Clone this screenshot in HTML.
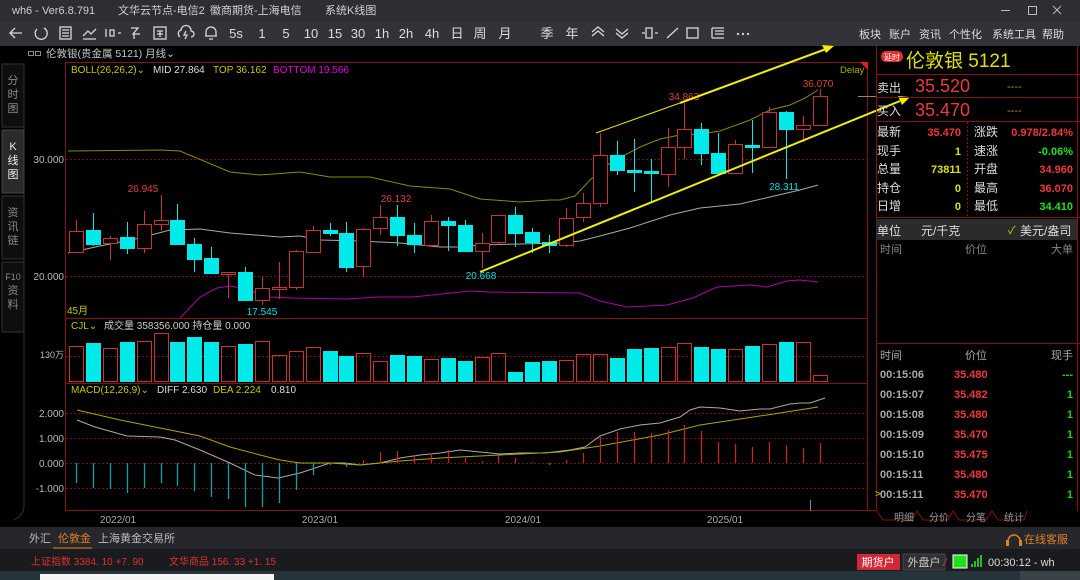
<!DOCTYPE html>
<html><head><meta charset="utf-8">
<style>
body{margin:0;width:1080px;height:580px;overflow:hidden;background:#000;font-family:"Liberation Sans","Noto Sans CJK SC",sans-serif;}
svg{display:block}
text{font-family:"Liberation Sans","Noto Sans CJK SC",sans-serif}
</style></head><body>
<svg id="s" width="1080" height="580" viewBox="0 0 1080 580" xmlns="http://www.w3.org/2000/svg">
<!-- title bar -->
<rect x="0" y="0" width="1080" height="21" fill="#2c2e32"/>
<g fill="#d0d0d0" font-size="11">
<text x="12" y="14">wh6  -  Ver6.8.791</text>
<text x="118" y="14">文华云节点-电信2</text>
<text x="210" y="14">徽商期货-上海电信</text>
<text x="325" y="14">系统K线图</text>
</g>
<g stroke="#bbb" stroke-width="1" fill="none">
<line x1="1001" y1="10.5" x2="1010" y2="10.5"/>
<rect x="1028.5" y="6.5" width="8" height="8"/>
<path d="M1053 6 L1061 14 M1061 6 L1053 14"/>
</g>
<!-- toolbar -->
<rect x="0" y="21" width="1080" height="25" fill="#313338"/>
<g fill="#dcdcdc" font-size="13" text-anchor="middle">
<text x="236" y="38">5s</text><text x="262" y="38">1</text><text x="286" y="38">5</text><text x="311" y="38">10</text><text x="335" y="38">15</text><text x="358" y="38">30</text><text x="382" y="38">1h</text><text x="406" y="38">2h</text><text x="432" y="38">4h</text><text x="457" y="38">日</text><text x="480" y="38">周</text><text x="505" y="38">月</text><text x="547" y="38">季</text><text x="572" y="38">年</text>
<text x="248" y="38" font-size="1"> </text>
</g>
<g stroke="#d8d8d8" stroke-width="1.3" fill="none">
<path d="M10 33 H22 M15 28 L10 33 L15 38"/>
<path d="M44 28 A6 6 0 1 1 37 29"/>
<rect x="60" y="27" width="11" height="12"/><path d="M62 30H69M62 33H69M62 36H69"/>
<path d="M83 36 L88 31 L91 34 L96 29 M83 39H96"/>
<path d="M106 29v8M110 30h4v6h-4zM118 33h3"/>
<path d="M131 28 L138 28 L133 34 L140 34 M134 34 v5"/>
<rect x="154" y="27" width="12" height="12"/><path d="M157 31h6M160 31v6M157 34h6"/>
<path d="M180 37 a4 4 0 0 1 1 -7 a5 5 0 0 1 10 1 a3 3 0 0 1 0 6 M186 31 l-2 4 h3 l-2 4"/>
<path d="M206 36 v-4 a5 5 0 0 1 10 0 v4 h1 h-12 M209 39h4"/>
<path d="M592 36 l6 -5 l6 5 M592 32 l6 -5 l6 5"/>
<path d="M616 29 l6 5 l6 -5 M616 33 l6 5 l6 -5"/>
<path d="M642 33h3M655 33h3M646 28h6v10h-6z"/>
<path d="M667 38 L678 28"/>
<rect x="687" y="28" width="11" height="10"/>
<path d="M712 28h12M715 31h9M715 34h9M712 38h12M712 28v10"/>
</g>
<g fill="#ccc"><circle cx="738" cy="34" r="1.2"/><circle cx="743" cy="34" r="1.2"/><circle cx="748" cy="34" r="1.2"/></g>
<g fill="#dcdcdc" font-size="11">
<text x="859" y="38">板块</text><text x="889" y="38">账户</text><text x="919" y="38">资讯</text><text x="949" y="38">个性化</text><text x="992" y="38">系统工具</text><text x="1042" y="38">帮助</text>
</g>
<!-- chart header -->
<g stroke="#888" fill="none" stroke-width="1"><rect x="28.5" y="51.5" width="5" height="4"/><rect x="35.5" y="51.5" width="5" height="4"/></g>
<text x="46" y="57" fill="#c8c8c8" font-size="10.5">伦敦银(贵金属 5121)   月线⌄</text>
<!-- left tabs -->
<rect x="0" y="63" width="25" height="464" fill="#000"/>
<path d="M24 63 V505 Q24 515 14 520" stroke="#333" fill="none"/>
<rect x="2" y="64" width="22" height="63" fill="#0e0e0e" stroke="#333"/>
<rect x="2" y="130" width="22" height="63" fill="#2a2a2a" stroke="#444"/>
<rect x="2" y="196" width="22" height="63" fill="#0e0e0e" stroke="#333"/>
<rect x="2" y="262" width="22" height="70" fill="#0e0e0e" stroke="#333"/>
<g font-size="11" text-anchor="middle" fill="#888">
<text x="13" y="84">分</text><text x="13" y="98">时</text><text x="13" y="112">图</text>
<text x="13" y="150" fill="#eee">K</text><text x="13" y="164" fill="#eee">线</text><text x="13" y="178" fill="#eee">图</text>
<text x="13" y="216">资</text><text x="13" y="230">讯</text><text x="13" y="244">链</text>
<text x="13" y="280" font-size="9">F10</text><text x="13" y="294">资</text><text x="13" y="308">料</text>
</g>
<!-- chart frame -->
<g stroke="#8a1010" fill="none" stroke-width="1">
<line x1="66" y1="62.5" x2="868" y2="62.5"/>
<line x1="65.5" y1="62" x2="65.5" y2="511"/>
<line x1="66" y1="318.5" x2="868" y2="318.5"/>
<line x1="66" y1="383.5" x2="868" y2="383.5"/>
<line x1="66" y1="510.5" x2="876" y2="510.5"/>
<line x1="867.5" y1="62" x2="867.5" y2="511"/>
</g>
<path d="M860 62 L868 62 L868 70 Z" fill="#e02020"/>
<g stroke="#7a1010" stroke-dasharray="2,2" stroke-width="1">
<line x1="66" y1="159.5" x2="868" y2="159.5"/>
<line x1="66" y1="276.5" x2="868" y2="276.5"/>
<line x1="66" y1="356.5" x2="868" y2="356.5"/>
<line x1="66" y1="413.5" x2="868" y2="413.5"/>
<line x1="66" y1="438.5" x2="868" y2="438.5"/>
<line x1="66" y1="463.5" x2="868" y2="463.5"/>
<line x1="66" y1="488.5" x2="868" y2="488.5"/>
</g>
<g font-size="10" fill="#bbb" text-anchor="end">
<text x="64" y="163">30.000</text><text x="64" y="280">20.000</text><text x="64" y="358" font-size="9">130万</text>
<text x="64" y="417">2.000</text><text x="64" y="442">1.000</text><text x="64" y="467">0.000</text><text x="64" y="492">-1.000</text>
</g>
<g font-size="10" fill="#aaa" text-anchor="middle">
<text x="118" y="523">2022/01</text><text x="320" y="523">2023/01</text><text x="523" y="523">2024/01</text><text x="725" y="523">2025/01</text>
</g>
<g font-size="10">
<text x="71" y="73" fill="#c8c800">BOLL(26,26,2)⌄</text>
<text x="153" y="73" fill="#ddd">MID 27.864</text>
<text x="213" y="73" fill="#c8c800">TOP 36.162</text>
<text x="273" y="73" fill="#e000e0">BOTTOM 19.566</text>
<text x="71" y="329" fill="#c8c800">CJL⌄</text>
<text x="104" y="329" fill="#ccc">成交量 358356.000  持仓量 0.000</text>
<text x="71" y="393" fill="#c8c800">MACD(12,26,9)⌄</text>
<text x="157" y="393" fill="#ddd">DIFF 2.630</text>
<text x="213" y="393" fill="#c8c800">DEA 2.224</text>
<text x="271" y="393" fill="#ddd">0.810</text>
<text x="67" y="314" fill="#c8c800">45月</text>
<text x="840" y="73" fill="#b0b000" font-family="Liberation Mono,monospace" font-size="9.5">Delay</text>
</g>
<!-- boll lines -->
<polyline fill="none" stroke="#8a8a00" stroke-width="1" points="68,151 160,150 180,151 230,172 260,175 300,172 330,177 370,177 410,186 450,189 480,199 520,202 550,200 560,200 575,196 590,180 610,163 625,155 640,147 660,139 680,135 700,134 720,131 750,120 770,110 790,105 805,98 818,90"/>
<polyline fill="none" stroke="#aaa" stroke-width="1" points="68,253 100,246 140,238 170,230 200,229 230,233 280,237 300,236 320,240 360,241 400,243 440,247 460,247 480,245 520,244 560,243 580,241 600,236 630,228 670,215 700,208 740,204 770,197 800,190 818,185"/>
<polyline fill="none" stroke="#b000b0" stroke-width="1" points="180,318 200,297 217,288 230,286 247,289 267,297 293,298 347,299 377,297 413,297 470,291 490,292 580,293 600,301 627,307 667,305 693,298 717,287 750,285 767,287 787,281 800,280 818,282"/>
<polyline fill="none" stroke="#aaa" stroke-width="1" points="77,420 95,427 127,436 160,437 175,440 200,450 230,463 255,475 278,478 300,473 330,463 345,463 360,465 380,463 400,458 420,455 440,453 460,450 480,452 500,454 520,453 545,453 570,450 585,447 600,436 620,429 640,425 660,423 680,417 690,410 700,407 720,408 740,411 760,409 770,409 790,404 800,403 810,403 825,398"/>
<polyline fill="none" stroke="#a8a800" stroke-width="1" points="77,410 120,420 160,428 200,436 230,447 260,455 280,460 300,463 330,463 360,465 400,461 440,458 500,455 560,452 600,446 660,435 700,425 740,419 780,413 818,407"/>
<g id="bars"></g>
<!-- labels -->
<g font-size="10">
<text x="143" y="192" fill="#e04040" text-anchor="middle">26.945</text>
<text x="262" y="315" fill="#00e0e0" text-anchor="middle">17.545</text>
<text x="396" y="202" fill="#e04040" text-anchor="middle">26.132</text>
<text x="481" y="279" fill="#00e0e0" text-anchor="middle">20.668</text>
<text x="684" y="100" fill="#e04040" text-anchor="middle">34.863</text>
<text x="784" y="190" fill="#00e0e0" text-anchor="middle">28.311</text>
<text x="818" y="87" fill="#e04040" text-anchor="middle">36.070</text>
</g>
<line x1="858" y1="96.5" x2="876" y2="96.5" stroke="#888"/>
<line x1="810.5" y1="500" x2="810.5" y2="511" stroke="#888"/>
<!-- trend lines -->
<line x1="596" y1="133" x2="680" y2="103" stroke="#e8e800" stroke-width="1"/>
<line x1="680" y1="103" x2="826" y2="49" stroke="#f0f000" stroke-width="2"/>
<path d="M834 46 L822 45 L826 53 Z" fill="#f0f000"/>
<line x1="480" y1="272" x2="900" y2="101" stroke="#f0f000" stroke-width="2"/>
<path d="M910 97 L898 96 L902 105 Z" fill="#f0f000"/>
<!-- right panel -->
<g stroke="#8a1010" fill="none">
<line x1="876.5" y1="46" x2="876.5" y2="511"/>
<line x1="876" y1="74.5" x2="1080" y2="74.5"/>
<line x1="876" y1="97.5" x2="1080" y2="97.5"/>
<line x1="876" y1="121.5" x2="1080" y2="121.5"/>
<line x1="967.5" y1="122" x2="967.5" y2="217" stroke-dasharray="2,2"/>
<line x1="876" y1="217.5" x2="1080" y2="217.5"/>
<line x1="876" y1="343.5" x2="1080" y2="343.5"/>
<line x1="1077.5" y1="46" x2="1077.5" y2="511"/>
</g>
<rect x="881" y="51" width="22" height="11" rx="5" fill="#e03030"/>
<text x="892" y="60" fill="#fff" font-size="8" text-anchor="middle">延时</text>
<text x="906" y="67" fill="#e0e000" font-size="19">伦敦银  5121</text>
<g font-size="12" fill="#ddd"><text x="877" y="92">卖出</text><text x="877" y="115">买入</text></g>
<g font-size="18" fill="#f03838"><text x="915" y="92">35.520</text><text x="915" y="116">35.470</text></g>
<g font-size="11" fill="#a0a000"><text x="1007" y="90">----</text><text x="1007" y="114">----</text></g>
<g font-size="12" fill="#ddd">
<text x="877" y="136">最新</text><text x="877" y="155">现手</text><text x="877" y="173">总量</text><text x="877" y="192">持仓</text><text x="877" y="210">日增</text>
<text x="974" y="136">涨跌</text><text x="974" y="155">速涨</text><text x="974" y="173">开盘</text><text x="974" y="192">最高</text><text x="974" y="210">最低</text>
</g>
<g font-size="11" font-weight="bold" text-anchor="end">
<text x="961" y="136" fill="#f03838">35.470</text><text x="961" y="155" fill="#e0e000">1</text><text x="961" y="173" fill="#e0e000">73811</text><text x="961" y="192" fill="#e0e000">0</text><text x="961" y="210" fill="#e0e000">0</text>
<text x="1073" y="136" fill="#f03838">0.978/2.84%</text><text x="1073" y="155" fill="#20e020">-0.06%</text><text x="1073" y="173" fill="#f03838">34.960</text><text x="1073" y="192" fill="#f03838">36.070</text><text x="1073" y="210" fill="#20e020">34.410</text>
</g>
<rect x="876" y="219" width="201" height="21" fill="#2a2b2b"/>
<g font-size="12" fill="#ddd"><text x="877" y="235">单位</text><text x="921" y="235">元/千克</text><text x="1020" y="235">美元/盎司</text></g>
<text x="1008" y="234" fill="#d0d000" font-size="11">✓</text>
<g font-size="11" fill="#888"><text x="880" y="253">时间</text><text x="965" y="253">价位</text><text x="1073" y="253" text-anchor="end">大单</text></g>
<g font-size="11" fill="#aaa"><text x="880" y="359">时间</text><text x="965" y="359">价位</text><text x="1073" y="359" text-anchor="end">现手</text></g>
<g font-size="11" font-weight="bold" fill="#aaa">
<text x="880" y="378">00:15:06</text><text x="880" y="398">00:15:07</text><text x="880" y="418">00:15:08</text><text x="880" y="438">00:15:09</text><text x="880" y="458">00:15:10</text><text x="880" y="478">00:15:11</text><text x="880" y="498">00:15:11</text>
</g>
<text x="875" y="497" fill="#d0d000" font-size="10">&gt;</text>
<g font-size="11" font-weight="bold" fill="#f03838">
<text x="954" y="378">35.480</text><text x="954" y="398">35.482</text><text x="954" y="418">35.480</text><text x="954" y="438">35.470</text><text x="954" y="458">35.475</text><text x="954" y="478">35.480</text><text x="954" y="498">35.470</text>
</g>
<g font-size="11" font-weight="bold" fill="#20d020" text-anchor="end">
<text x="1073" y="378">---</text><text x="1073" y="398">1</text><text x="1073" y="418">1</text><text x="1073" y="438">1</text><text x="1073" y="458">1</text><text x="1073" y="478">1</text><text x="1073" y="498">1</text>
</g>
<path d="M877 511 L883 520 L911 520 L917 511 L923 520 L948 520 L953 511 L959 520 L986 520 L992 511 L998 520 L1024 520 L1027 511" stroke="#8a1010" fill="none"/>
<g font-size="10" fill="#999"><text x="894" y="521">明细</text><text x="929" y="521">分价</text><text x="966" y="521">分笔</text><text x="1004" y="521">统计</text></g>
<!-- bottom bars -->
<rect x="0" y="527" width="1080" height="22" fill="#25272b"/>
<g font-size="11"><text x="29" y="542" fill="#bbb">外汇</text><text x="58" y="542" fill="#e08020">伦敦金</text><text x="98" y="542" fill="#bbb">上海黄金交易所</text></g>
<line x1="53" y1="548" x2="92" y2="548" stroke="#e08020"/>
<path d="M1008 545 v-4 a6 6 0 0 1 12 0 v4" stroke="#e08020" stroke-width="1.5" fill="none"/>
<rect x="1006" y="540" width="3" height="6" fill="#e08020"/><rect x="1019" y="540" width="3" height="6" fill="#e08020"/>
<text x="1024" y="543" fill="#e08020" font-size="11">在线客服</text>
<rect x="0" y="549" width="1080" height="22" fill="#1a1b1e"/>
<g font-size="10" fill="#e03030"><text x="31" y="565">上证指数  3384. 10  +7. 90</text><text x="169" y="565">文华商品  156. 33  +1. 15</text></g>
<rect x="857" y="554" width="43" height="16" fill="#d02838"/>
<text x="878" y="566" fill="#fff" font-size="11" text-anchor="middle">期货户</text>
<rect x="903" y="554" width="42" height="16" fill="#2e3034" stroke="#444"/>
<text x="924" y="566" fill="#ccc" font-size="11" text-anchor="middle">外盘户</text>
<line x1="943" y1="566" x2="947" y2="558" stroke="#c03030"/>
<rect x="953" y="555" width="14" height="13" fill="#20e020" stroke="#fff"/>
<g fill="#20c020"><rect x="971" y="564" width="2" height="3"/><rect x="974" y="561" width="2" height="6"/><rect x="977" y="558" width="2" height="9"/><rect x="980" y="555" width="2" height="12"/></g>
<text x="988" y="566" fill="#ddd" font-size="11">00:30:12 - wh</text>
<rect x="0" y="571" width="1080" height="9" fill="#24343a"/>
<rect x="40" y="574" width="234" height="6" fill="#f4f4f4"/>
<rect x="1020" y="571" width="60" height="9" fill="#3a4448"/>
</svg>
<script>
var D=[["r",231,252,220,252],["c",230,244,213,246],["r",238,243,236,260],["c",237,248,222,254],["r",224,248,211,253],["r",220,224,195,231],["c",220,244,204,245],["c",244,259,238,272],["c",258,273,247,273],["r",272,274,272,298],["c",272,300,267,300],["r",288,300,277,305],["r",287,289,262,299],["r",251,287,250,290],["r",230,252,226,253],["c",230,233,223,236],["c",233,267,222,272],["r",229,266,228,277],["r",217,228,205,235],["c",217,235,205,246],["c",235,244,223,253],["r",221,245,215,247],["c",221,225,217,251],["c",225,251,220,251],["r",243,251,233,268],["r",215,242,215,245],["c",215,233,207,247],["c",232,242,228,253],["c",242,245,235,253],["r",218,245,208,247],["r",203,217,193,222],["r",155,203,133,207],["c",155,170,141,175],["c",170,172,139,192],["c",171,173,159,202],["r",147,174,128,187],["r",129,147,103,159],["c",129,153,123,165],["c",153,173,133,175],["r",144,173,140,173],["c",145,147,120,173],["r",112,147,107,148],["c",112,129,111,179],["r",125,129,116,142],["r",96,125,89,125]];
var V=[346,343,348,342,341,333,342,337,342,346,344,341,355,351,347,351,356,353,361,355,356,359,358,361,357,353,372,362,361,360,354,354,358,349,348,347,343,347,349,349,346,344,342,342,375];
var M=[483,488,489,493,488,483,486,491,497,499,507,507,503,490,475,465,467,460,452,451,455,453,450,458,461,455,458,462,465,460,453,437,432,432,433,430,425,431,442,444,447,442,445,448,443];
var h="",R="#c83232",C="#00eaea";
for(var i=0;i<D.length;i++){var d=D[i],cx=Math.round(76+16.9*i),col=d[0]=="r"?R:C;
h+='<line x1="'+(cx+.5)+'" y1="'+d[3]+'" x2="'+(cx+.5)+'" y2="'+d[4]+'" stroke="'+col+'"/>';
var bh=Math.max(d[2]-d[1],1);
h+='<rect x="'+(cx-6.5)+'" y="'+(d[1]+.5)+'" width="14" height="'+bh+'" stroke="'+col+'" fill="'+(d[0]=="r"?"#000":C)+'"/>';
h+='<rect x="'+(cx-6.5)+'" y="'+(V[i]+.5)+'" width="14" height="'+(381-V[i])+'" stroke="'+col+'" fill="'+(d[0]=="r"?"none":C)+'"/>';
var m=M[i],neg=m>463;h+='<line x1="'+(cx+.5)+'" y1="463" x2="'+(cx+.5)+'" y2="'+m+'" stroke="'+(neg?"#10a0a8":"#c02828")+'" stroke-width="1.3"/>';}
document.getElementById("bars").innerHTML=h;
</script>
</body></html>
